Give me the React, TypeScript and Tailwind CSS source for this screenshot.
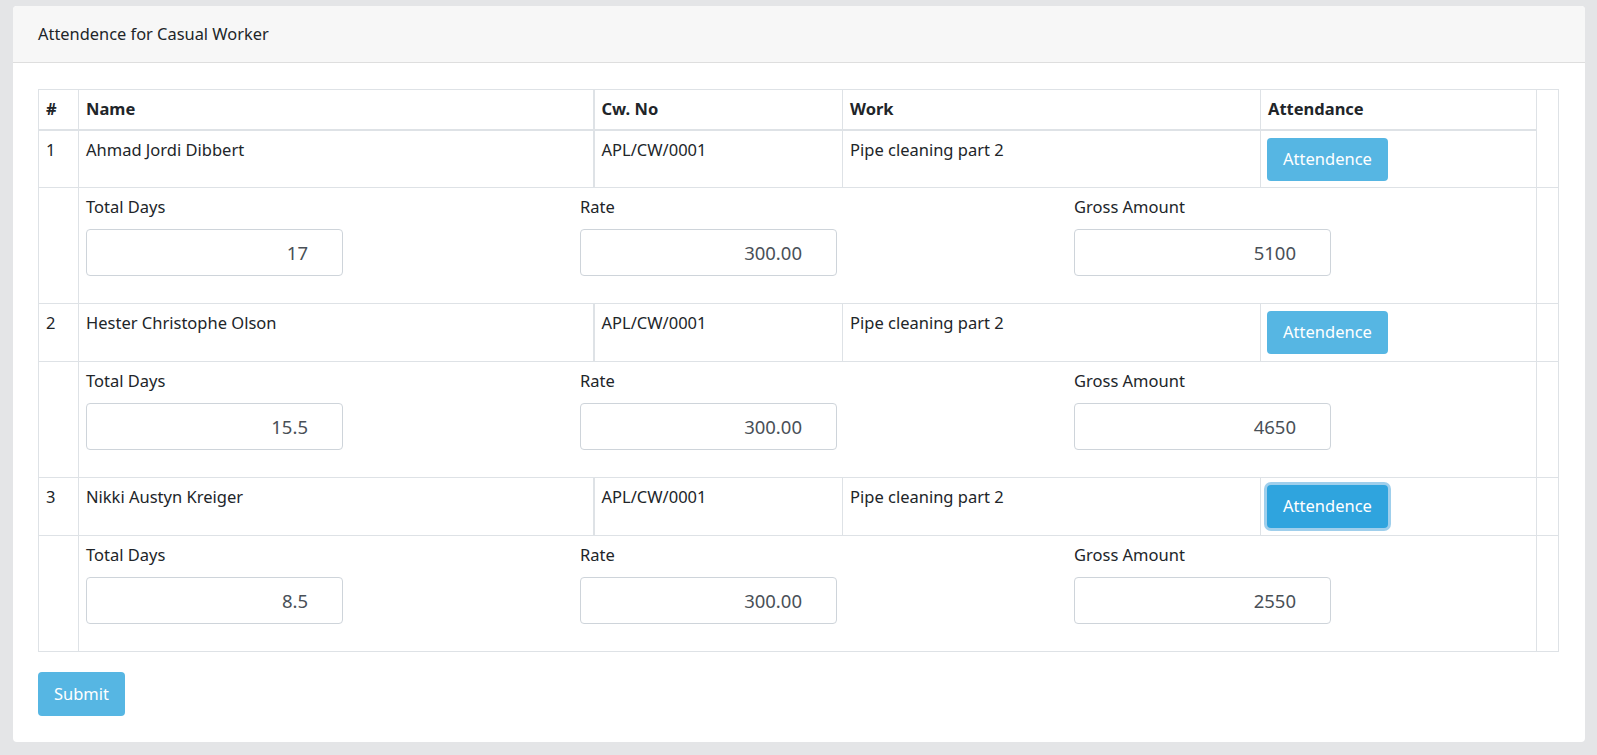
import React from "react";

const rows = [
  { n: 1, name: "Ahmad Jordi Dibbert", cw: "APL/CW/0001", work: "Pipe cleaning part 2", days: "17", rate: "300.00", gross: "5100", focus: false },
  { n: 2, name: "Hester Christophe Olson", cw: "APL/CW/0001", work: "Pipe cleaning part 2", days: "15.5", rate: "300.00", gross: "4650", focus: false },
  { n: 3, name: "Nikki Austyn Kreiger", cw: "APL/CW/0001", work: "Pipe cleaning part 2", days: "8.5", rate: "300.00", gross: "2550", focus: true },
];

function Field({ label, value }: { label: string; value: string }) {
  return (
    <div className="flex flex-col">
      <div className="h-[25px] leading-[25px] text-[#212529]">{label}</div>
      <div className="mt-[10px] flex h-[47px] w-[257px] items-center justify-end rounded-[4px] border border-[#ced4da] bg-white pr-[34px] text-[18.5px] text-[#495057]">
        {value}
      </div>
    </div>
  );
}

export default function App() {
  return (
    <div
      className="min-h-screen bg-[#e4e5e7] pl-[13px] pr-[12px] pt-[6px] pb-[13px] text-[16.5px] text-[#212529]"
      style={{ fontFamily: '"Noto Sans", "Open Sans", sans-serif' }}
    >
      <div className="overflow-hidden rounded-[4px] bg-white">
        <div className="flex h-[57px] items-center border-b border-[#dedede] bg-[#f7f7f7] pl-[25px] text-[16.4px]">
          Attendence for Casual Worker
        </div>
        <div className="px-[25px] pt-[26px] pb-[26px]">
          <table className="w-[1520px] table-fixed border-collapse border border-[#dee2e6]">
            <colgroup>
              <col className="w-[40px]" />
              <col className="w-[515px]" />
              <col className="w-[249px]" />
              <col className="w-[418px]" />
              <col className="w-[276px]" />
              <col className="w-[22px]" />
            </colgroup>
            <thead>
              <tr>
                <th className="h-[40px] border border-b-2 border-[#dee2e6] px-[7px] text-left align-middle font-bold leading-[24px]">#</th>
                <th className="border border-r-2 border-b-2 border-[#dee2e6] px-[7px] text-left align-middle font-bold leading-[24px]">Name</th>
                <th className="border border-b-2 border-[#dee2e6] px-[7px] text-left align-middle font-bold leading-[24px]">Cw. No</th>
                <th className="border border-b-2 border-[#dee2e6] px-[7px] text-left align-middle font-bold leading-[24px]">Work</th>
                <th className="border border-b-2 border-[#dee2e6] px-[7px] text-left align-middle font-bold leading-[24px]">Attendance</th>
              </tr>
            </thead>
            <tbody>
              {rows.map((r) => (
                <React.Fragment key={r.n}>
                  <tr>
                    <td className="h-[58px] border border-[#dee2e6] px-[7px] pt-[6px] align-top leading-[25px]">{r.n}</td>
                    <td className="border border-r-2 border-[#dee2e6] px-[7px] pt-[6px] align-top leading-[25px]">{r.name}</td>
                    <td className="border border-[#dee2e6] px-[7px] pt-[6px] align-top leading-[25px]">{r.cw}</td>
                    <td className="border border-[#dee2e6] px-[7px] pt-[6px] align-top leading-[25px]">{r.work}</td>
                    <td className="border border-[#dee2e6] px-[6px] pt-[7px] align-top">
                      <button
                        className={
                          r.focus
                            ? "h-[43px] w-[121px] rounded-[4px] bg-[#2fa4de] text-white ring-[3px] ring-[#9fcfec]"
                            : "h-[43px] w-[121px] rounded-[4px] bg-[#56b6e3] text-white"
                        }
                      >
                        Attendence
                      </button>
                    </td>
                  </tr>
                  <tr>
                    <td className="border border-[#dee2e6]"></td>
                    <td colSpan={4} className="h-[116px] border border-[#dee2e6] pl-[7px] pt-[6px] align-top">
                      <div className="grid grid-cols-[494px_494px_1fr]">
                        <Field label="Total Days" value={r.days} />
                        <Field label="Rate" value={r.rate} />
                        <Field label="Gross Amount" value={r.gross} />
                      </div>
                    </td>
                    <td className="border border-[#dee2e6]"></td>
                  </tr>
                </React.Fragment>
              ))}
            </tbody>
          </table>
          <button className="mt-[20px] h-[44px] w-[87px] rounded-[4px] bg-[#56b6e3] text-white">Submit</button>
        </div>
      </div>
    </div>
  );
}
